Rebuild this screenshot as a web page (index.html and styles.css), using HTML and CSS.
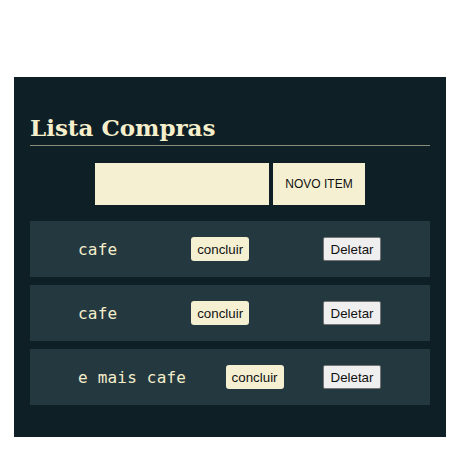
FILE: index.html
```html
<!DOCTYPE html>
<html lang="pt-BR">
<head>
<meta charset="utf-8">
<title>Lista Compras</title>
<link rel="stylesheet" href="styles.css">
</head>
<body>
<main class="app">
  <h1 class="title">Lista Compras</h1>
  <form class="add-form" onsubmit="return false">
    <input class="add-input" type="text">
    <button class="add-btn" type="submit">NOVO ITEM</button>
  </form>
  <ul class="list">
    <li class="item">
      <span class="item-name">cafe</span>
      <button class="btn-done">concluir</button>
      <button class="btn-del">Deletar</button>
    </li>
    <li class="item">
      <span class="item-name">cafe</span>
      <button class="btn-done">concluir</button>
      <button class="btn-del">Deletar</button>
    </li>
    <li class="item">
      <span class="item-name">e mais cafe</span>
      <button class="btn-done">concluir</button>
      <button class="btn-del">Deletar</button>
    </li>
  </ul>
</main>
</body>
</html>
```
FILE: styles.css
```css
html, body {
  margin: 0;
  padding: 0;
  background: #ffffff;
}

.app {
  box-sizing: border-box;
  width: 432px;
  margin: 77px 0 0 14px;
  padding: 35px 16px 32px;
  background: #0e1f26;
}

.title {
  margin: 0;
  padding: 0 0 1px;
  font-family: "DejaVu Serif", serif;
  font-weight: bold;
  font-size: 23px;
  line-height: 32px;
  color: #f6efcc;
  border-bottom: 1px solid #8b8b7c;
}

.add-form {
  display: flex;
  justify-content: center;
  gap: 4px;
  margin: 17px 0 16px;
}

.add-input {
  box-sizing: border-box;
  width: 174px;
  height: 42px;
  margin: 0;
  border: none;
  background: #f5f0d2;
}

.add-btn {
  box-sizing: border-box;
  width: 92px;
  height: 42px;
  margin: 0;
  border: none;
  background: #f5f0d2;
  font-family: "Liberation Sans", Arial, sans-serif;
  font-size: 12px;
  color: #111111;
}

.list {
  list-style: none;
  margin: 0;
  padding: 0;
  display: flex;
  flex-direction: column;
  gap: 8px;
}

.item {
  box-sizing: border-box;
  height: 56px;
  padding: 0 49px 0 48px;
  display: flex;
  align-items: center;
  justify-content: space-between;
  background: #243840;
}

.item-name {
  font-family: "DejaVu Sans Mono", monospace;
  font-size: 16px;
  letter-spacing: 0.2px;
  color: #f5eecb;
}

.btn-done,
.btn-del {
  box-sizing: border-box;
  height: 24px;
  width: 58px;
  padding: 0;
  margin: 0;
  font-family: "Liberation Sans", Arial, sans-serif;
  font-size: 13.33px;
  color: #111111;
  border-radius: 3px;
}

.btn-done {
  border: none;
  background: #f5f0d2;
}

.btn-del {
  border: 1px solid #767676;
  border-radius: 2px;
  background: #efefef;
}
```
